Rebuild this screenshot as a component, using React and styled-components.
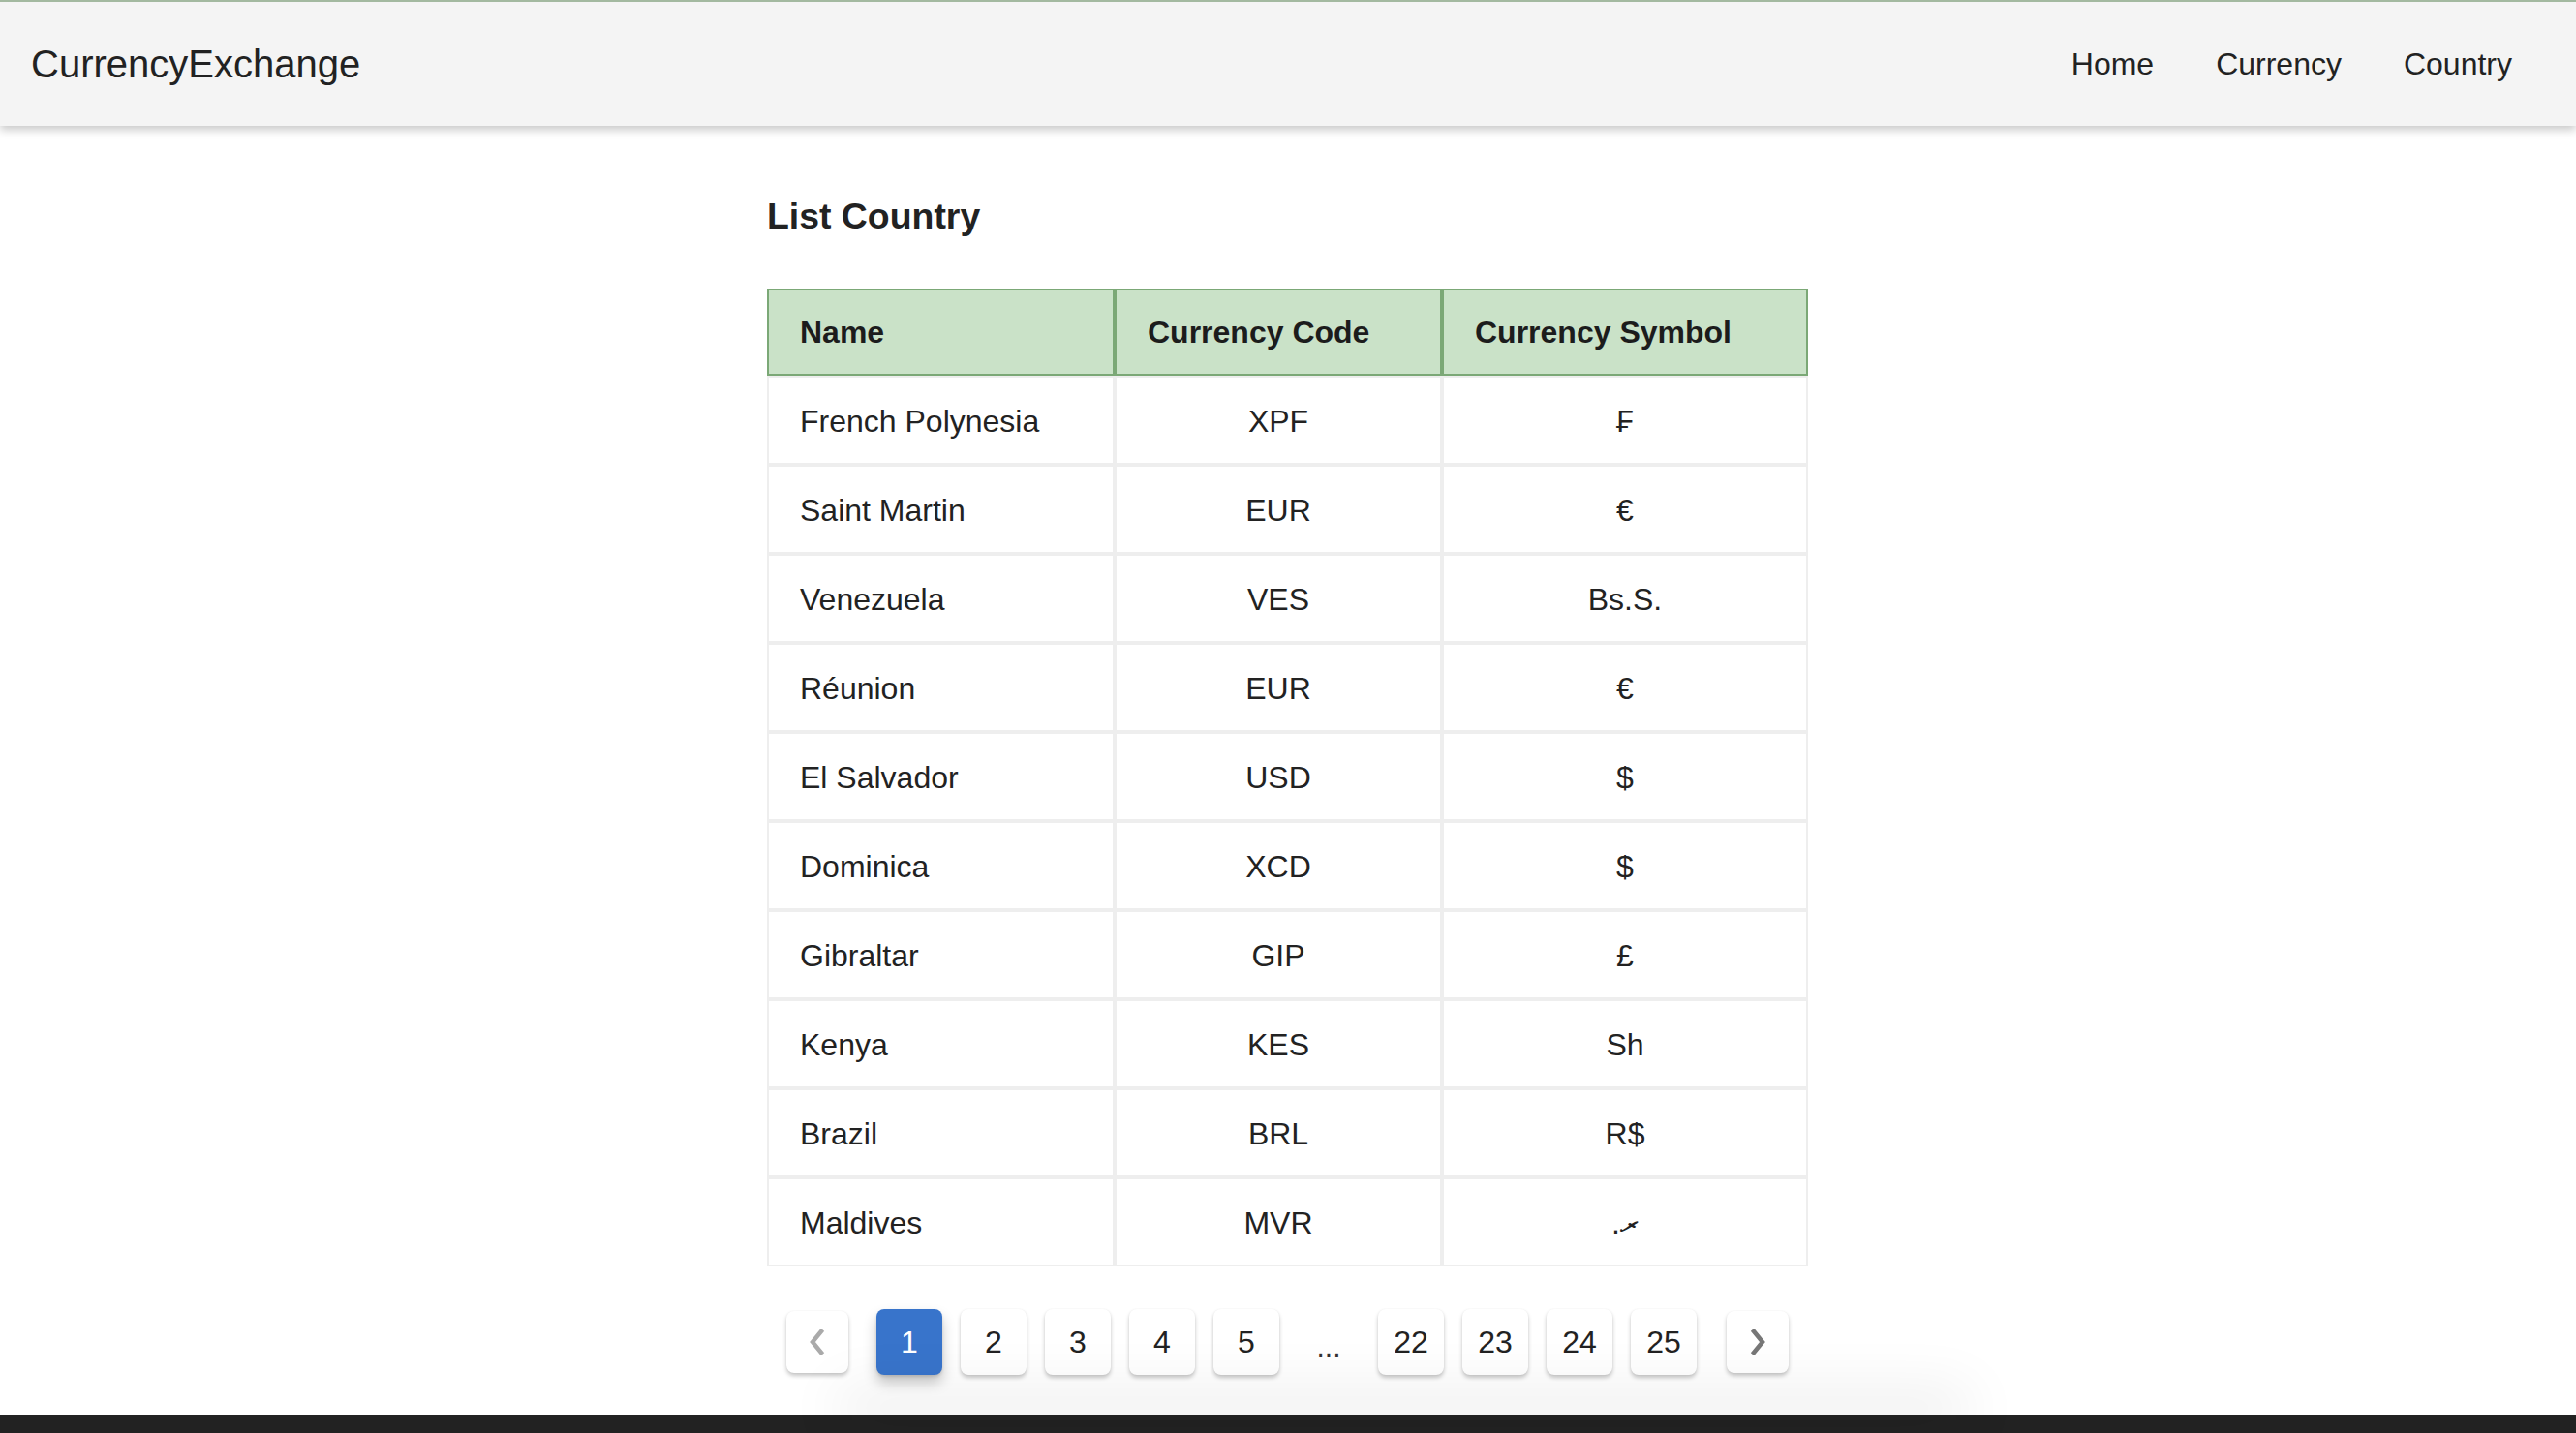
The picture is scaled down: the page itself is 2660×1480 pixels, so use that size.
import React from "react";
import styled, { createGlobalStyle } from "styled-components";

const GlobalStyle = createGlobalStyle`
  html, body {
    margin: 0;
    padding: 0;
    background: #ffffff;
    font-family: "Liberation Sans", Arial, "DejaVu Sans", sans-serif;
    color: #222222;
  }
  * { box-sizing: border-box; }
`;

const Page = styled.div`
  min-height: 100vh;
  display: flex;
  flex-direction: column;
`;

const NavBar = styled.header`
  height: 130px;
  border-top: 2px solid #a3b9a0;
  background: #f4f4f4;
  box-shadow: 0 4px 9px rgba(0, 0, 0, 0.22);
  display: flex;
  align-items: center;
  justify-content: space-between;
  padding: 0 66px 0 32px;
  position: relative;
  z-index: 1;
`;

const Brand = styled.a`
  font-size: 40px;
  color: #222222;
  text-decoration: none;
`;

const NavLinks = styled.nav`
  display: flex;
  align-items: center;
  gap: 64px;
`;

const NavLink = styled.a`
  font-size: 32px;
  color: #222222;
  text-decoration: none;
`;

const Main = styled.main`
  width: 1076px;
  margin: 0 auto;
  padding-top: 72px;
`;

const Title = styled.h3`
  margin: 0 0 53px;
  font-size: 37.4px;
  line-height: 43px;
  font-weight: 700;
  color: #222222;
`;

const Table = styled.table`
  width: 1075px;
  table-layout: fixed;
  border-collapse: separate;
  border-spacing: 0;
  font-size: 32px;
`;

const HeadCell = styled.th`
  width: ${(p) => p.$w}px;
  height: 90px;
  padding: 0 32px;
  text-align: left;
  font-weight: 700;
  color: #1c1c1c;
  background: #cae2c8;
  border: 2px solid #7ba876;
`;

const Cell = styled.td`
  height: 92px;
  padding: 3px 32px 0;
  text-align: ${(p) => (p.$center ? "center" : "left")};
  color: #222222;
  border: 2px solid #eeeeee;
  white-space: nowrap;
`;

const Pager = styled.div`
  margin-top: 44px;
  height: 68px;
  display: flex;
  align-items: center;
  justify-content: center;
  gap: 19px;
`;

const PageButton = styled.button`
  width: 68px;
  height: 68px;
  border: none;
  border-radius: 8px;
  font-family: inherit;
  font-size: 32px;
  padding: 0;
  display: flex;
  align-items: center;
  justify-content: center;
  color: ${(p) => (p.$active ? "#ffffff" : "#222222")};
  background: ${(p) => (p.$active ? "#3874cb" : "#ffffff")};
  box-shadow: ${(p) =>
    p.$active
      ? "0 8px 14px rgba(0, 0, 0, 0.22), 0 2px 3px rgba(0, 0, 0, 0.12)"
      : "0 3px 4px rgba(0, 0, 0, 0.22), 0 0 2px rgba(0, 0, 0, 0.06)"};
`;

const ArrowButton = styled(PageButton)`
  width: 64px;
  height: 64px;
  margin: ${(p) => (p.$side === "left" ? "0 10px 0 -1px" : "0 0 0 12px")};
  color: ${(p) => (p.$disabled ? "#aaaaaa" : "#777777")};
`;

const Ellipsis = styled.span`
  width: 64px;
  height: 68px;
  display: flex;
  align-items: flex-end;
  justify-content: center;
  padding-bottom: 12px;
  font-size: 30px;
  color: #333333;
`;

const Footer = styled.footer`
  margin-top: 41px;
  height: 140px;
  background: #222222;
`;

const FooterGlow = styled.div`
  width: 1140px;
  height: 6px;
  margin-left: calc(50% - 450px);
  box-shadow: 0 -10px 60px 14px rgba(0, 0, 0, 0.085);
`;

const Chevron = ({ dir }) => (
  <svg width="18" height="26" viewBox="0 0 18 26" fill="none">
    <polyline
      points={dir === "left" ? "13,2 4,13 13,24" : "5,2 14,13 5,24"}
      stroke="currentColor"
      strokeWidth="4.5"
      strokeLinecap="square"
      strokeLinejoin="miter"
    />
  </svg>
);

const rows = [
  ["French Polynesia", "XPF", "₣"],
  ["Saint Martin", "EUR", "€"],
  ["Venezuela", "VES", "Bs.S."],
  ["Réunion", "EUR", "€"],
  ["El Salvador", "USD", "$"],
  ["Dominica", "XCD", "$"],
  ["Gibraltar", "GIP", "£"],
  ["Kenya", "KES", "Sh"],
  ["Brazil", "BRL", "R$"],
  ["Maldives", "MVR", ".ރ"],
];

export default function App() {
  return (
    <Page>
      <GlobalStyle />
      <NavBar>
        <Brand href="#">CurrencyExchange</Brand>
        <NavLinks>
          <NavLink href="#">Home</NavLink>
          <NavLink href="#">Currency</NavLink>
          <NavLink href="#">Country</NavLink>
        </NavLinks>
      </NavBar>
      <Main>
        <Title>List Country</Title>
        <Table>
          <thead>
            <tr>
              <HeadCell $w={359}>Name</HeadCell>
              <HeadCell $w={338}>Currency Code</HeadCell>
              <HeadCell $w={378}>Currency Symbol</HeadCell>
            </tr>
          </thead>
          <tbody>
            {rows.map(([name, code, sym]) => (
              <tr key={name}>
                <Cell>{name}</Cell>
                <Cell $center>{code}</Cell>
                <Cell $center>{sym}</Cell>
              </tr>
            ))}
          </tbody>
        </Table>
        <Pager>
          <ArrowButton $side="left" $disabled>
            <Chevron dir="left" />
          </ArrowButton>
          <PageButton $active>1</PageButton>
          <PageButton>2</PageButton>
          <PageButton>3</PageButton>
          <PageButton>4</PageButton>
          <PageButton>5</PageButton>
          <Ellipsis>...</Ellipsis>
          <PageButton>22</PageButton>
          <PageButton>23</PageButton>
          <PageButton>24</PageButton>
          <PageButton>25</PageButton>
          <ArrowButton $side="right">
            <Chevron dir="right" />
          </ArrowButton>
        </Pager>
      </Main>
      <Footer>
        <FooterGlow />
      </Footer>
    </Page>
  );
}
